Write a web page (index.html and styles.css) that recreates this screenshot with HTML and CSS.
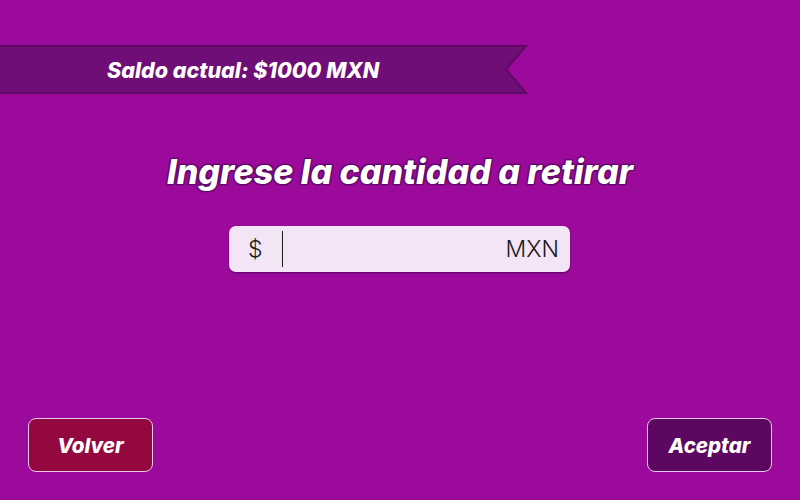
FILE: index.html
```html
<!DOCTYPE html>
<html lang="es">
<head>
<meta charset="utf-8">
<link rel="stylesheet" href="styles.css">
</head>
<body>
<div class="screen">
  <div class="banner">
    <svg class="banner-bg" width="528" height="49" viewBox="0 0 528 49">
      <polygon points="-2,1 526,1 506,24.5 526,48 -2,48" fill="#700e78" stroke="#5e0a66" stroke-width="2"/>
    </svg>
    <span class="banner-text">Saldo actual: $1000 MXN</span>
  </div>
  <h1 class="title">Ingrese la cantidad a retirar</h1>
  <div class="field">
    <span class="cur">$</span>
    <span class="caret"></span>
    <span class="unit">MXN</span>
  </div>
  <div class="actions">
    <button class="btn back">Volver</button>
    <button class="btn ok">Aceptar</button>
  </div>
</div>
</body>
</html>
```
FILE: styles.css
```css
html, body {
  margin: 0;
  padding: 0;
  width: 800px;
  height: 500px;
  overflow: hidden;
  background: #9c0a9c;
  font-family: Inter, "Noto Sans", sans-serif;
}
.screen {
  display: flex;
  flex-direction: column;
  height: 500px;
  padding-top: 45px;
  box-sizing: border-box;
}
.banner {
  position: relative;
  width: 528px;
  height: 49px;
  display: flex;
  align-items: center;
}
.banner-bg {
  position: absolute;
  left: 0;
  top: 0;
}
.banner-text {
  position: relative;
  margin-left: 107px;
  color: #fff;
  font-weight: 800;
  font-style: italic;
  font-size: 21.5px;
}
.title {
  margin: 58px 0 0;
  text-align: center;
  color: #fff;
  font-weight: 800;
  font-style: italic;
  font-size: 34px;
  line-height: 40px;
  text-shadow: 0 0 2px #5a0a62, 1px 1px 1px #5a0a62, -1px -1px 1px #5a0a62, 1px -1px 1px #5a0a62, -1px 1px 1px #5a0a62;
}
.field {
  align-self: center;
  margin: 34px 0 0 -1px;
  width: 341px;
  height: 46px;
  box-sizing: border-box;
  background: #f3e5f5;
  border-radius: 7px;
  box-shadow: 0 1px 2px rgba(60, 0, 60, 0.7);
  display: flex;
  align-items: center;
  padding: 0 11px 0 19px;
  color: #1a1a1a;
  font-weight: 300;
  font-size: 23px;
}
.cur {
  width: 34px;
}
.caret {
  width: 1px;
  height: 36px;
  background: #1a1a1a;
}
.unit {
  margin-left: auto;
  font-size: 23px;
}
.actions {
  margin-top: auto;
  display: flex;
  justify-content: space-between;
  padding: 0 28px 28px;
}
.btn {
  width: 125px;
  height: 54px;
  border: 1px solid #e8c8ea;
  border-radius: 8px;
  color: #fff;
  font-family: Inter, "Noto Sans", sans-serif;
  font-weight: 800;
  font-style: italic;
  font-size: 20.5px;
}
.back { background: #940840; }
.ok { background: #5c0860; }
```
